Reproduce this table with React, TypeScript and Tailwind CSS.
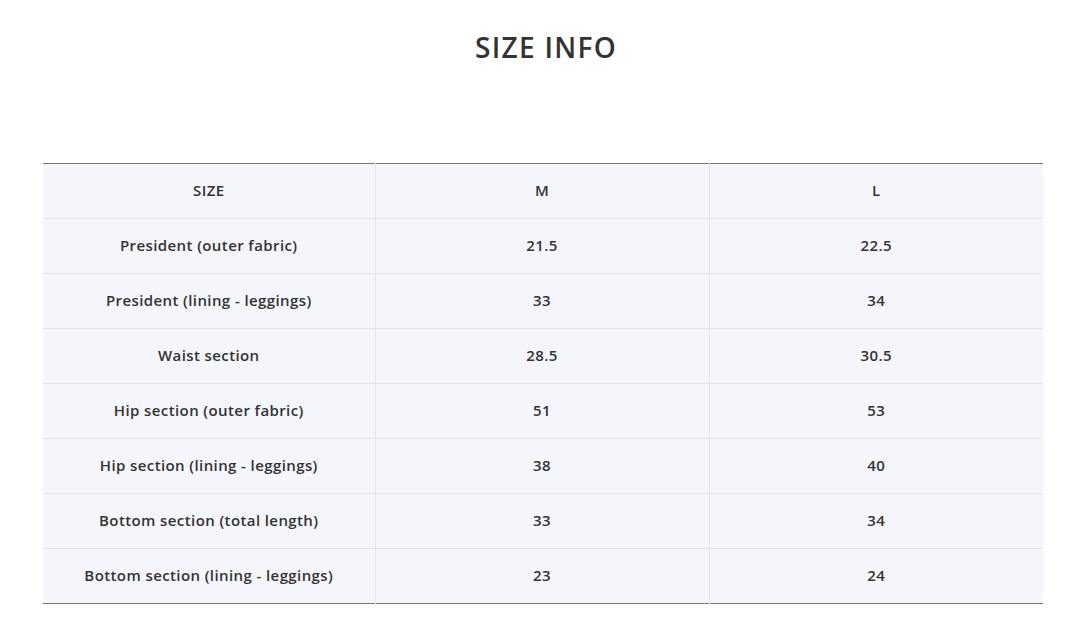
const rows: [string, string, string][] = [
  ["President (outer fabric)", "21.5", "22.5"],
  ["President (lining - leggings)", "33", "34"],
  ["Waist section", "28.5", "30.5"],
  ["Hip section (outer fabric)", "51", "53"],
  ["Hip section (lining - leggings)", "38", "40"],
  ["Bottom section (total length)", "33", "34"],
  ["Bottom section (lining - leggings)", "23", "24"],
];

function Cell({ children, last, bottom }: { children: React.ReactNode; last?: boolean; bottom?: boolean }) {
  return (
    <td
      className={
        "h-[55px] pb-[2px] text-center align-middle border-[#e4e4e7] " +
        (bottom ? "" : "border-b ") +
        (last ? "" : "border-r")
      }
    >
      {children}
    </td>
  );
}

export default function App() {
  return (
    <div className="min-h-[626px] bg-white font-['Open_Sans',sans-serif] text-[#333]">
      <div className="pt-[29px] text-center">
        <h2 className="text-[28px] font-semibold leading-[36px] tracking-[1.3px] text-[#333]">
          SIZE INFO
        </h2>
      </div>

      <div className="mx-[43px] mt-[98px] w-[1000px]">
        <table className="w-full table-fixed border-collapse border-t border-b border-[#777] bg-[#f5f6fb] text-[15px] font-semibold tracking-[0.4px]">
          <colgroup>
            <col className="w-[332px]" />
            <col className="w-[334px]" />
            <col className="w-[334px]" />
          </colgroup>
          <tbody>
            <tr>
              <Cell>SIZE</Cell>
              <Cell>M</Cell>
              <Cell last>L</Cell>
            </tr>
            {rows.map((r, i) => {
              const b = i === rows.length - 1;
              return (
                <tr key={i}>
                  <Cell bottom={b}>{r[0]}</Cell>
                  <Cell bottom={b}>{r[1]}</Cell>
                  <Cell bottom={b} last>
                    {r[2]}
                  </Cell>
                </tr>
              );
            })}
          </tbody>
        </table>
      </div>
    </div>
  );
}
